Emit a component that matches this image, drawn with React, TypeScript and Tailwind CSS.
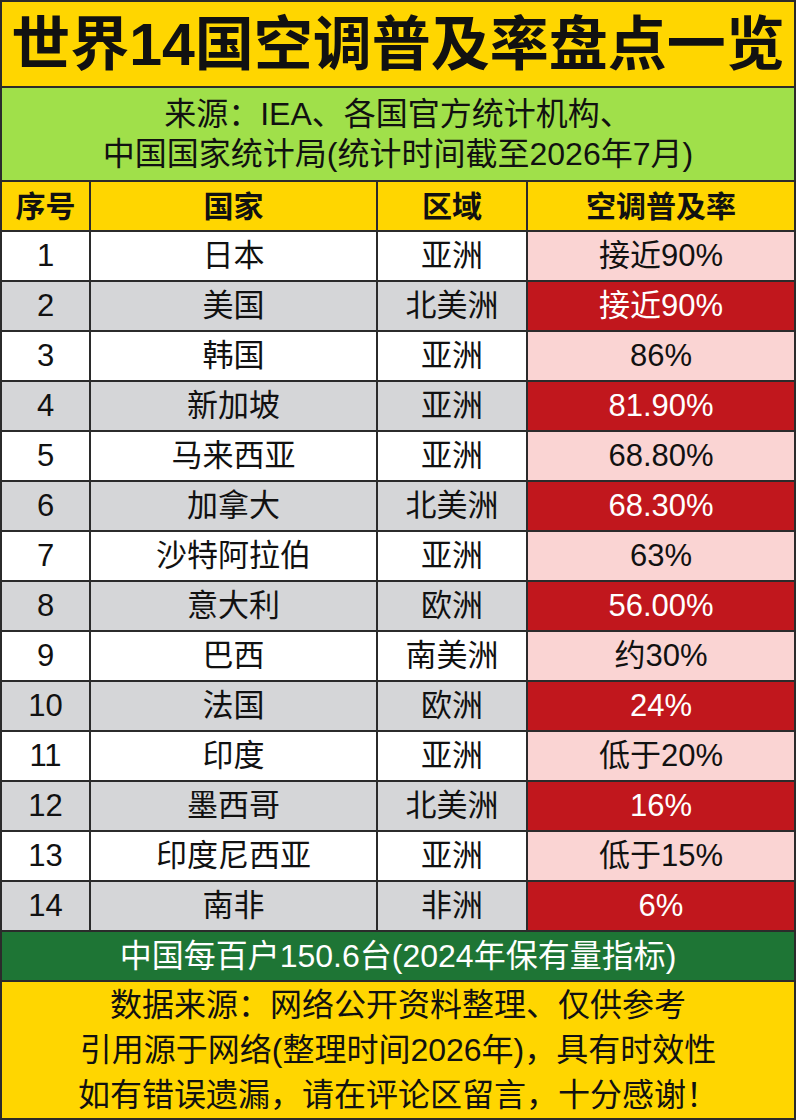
import React from "react";

const rows = [
  { no: 1, country: "日本", region: "亚洲", rate: "接近90%" },
  { no: 2, country: "美国", region: "北美洲", rate: "接近90%" },
  { no: 3, country: "韩国", region: "亚洲", rate: "86%" },
  { no: 4, country: "新加坡", region: "亚洲", rate: "81.90%" },
  { no: 5, country: "马来西亚", region: "亚洲", rate: "68.80%" },
  { no: 6, country: "加拿大", region: "北美洲", rate: "68.30%" },
  { no: 7, country: "沙特阿拉伯", region: "亚洲", rate: "63%" },
  { no: 8, country: "意大利", region: "欧洲", rate: "56.00%" },
  { no: 9, country: "巴西", region: "南美洲", rate: "约30%" },
  { no: 10, country: "法国", region: "欧洲", rate: "24%" },
  { no: 11, country: "印度", region: "亚洲", rate: "低于20%" },
  { no: 12, country: "墨西哥", region: "北美洲", rate: "16%" },
  { no: 13, country: "印度尼西亚", region: "亚洲", rate: "低于15%" },
  { no: 14, country: "南非", region: "非洲", rate: "6%" },
];

const font = {
  fontFamily: '"Liberation Sans", "Noto Sans CJK SC", sans-serif',
};

export default function App() {
  return (
    <div
      style={font}
      className="w-[796px] h-[1120px] flex flex-col border-2 border-[#2b2b2b] text-[#111] overflow-hidden"
    >
      <div className="h-[86px] shrink-0 bg-[#FFD600] border-b-2 border-[#2b2b2b] flex items-center justify-center pt-[2px]">
        <h1 className="text-[59px] font-bold leading-none whitespace-nowrap">
          世界14国空调普及率盘点一览
        </h1>
      </div>

      <div className="h-[94px] shrink-0 bg-[#A0E04A] border-b-2 border-[#2b2b2b] flex flex-col items-center justify-center text-[32px] leading-[40px]">
        <div>来源：IEA、各国官方统计机构、</div>
        <div>中国国家统计局(统计时间截至2026年7月)</div>
      </div>

      <div className="h-[50px] shrink-0 flex bg-[#FFD600] border-b-2 border-[#2b2b2b] text-[30px] font-bold">
        <div className="w-[89px] border-r-2 border-[#2b2b2b] flex items-center justify-center">
          序号
        </div>
        <div className="w-[287px] border-r-2 border-[#2b2b2b] flex items-center justify-center">
          国家
        </div>
        <div className="w-[150px] border-r-2 border-[#2b2b2b] flex items-center justify-center">
          区域
        </div>
        <div className="flex-1 flex items-center justify-center">空调普及率</div>
      </div>

      {rows.map((r) => {
        const even = r.no % 2 === 0;
        const base = even ? "bg-[#D5D6D8]" : "bg-white";
        return (
          <div
            key={r.no}
            className="h-[50px] shrink-0 flex border-b-2 border-[#2b2b2b] text-[31px]"
          >
            <div
              className={`w-[89px] border-r-2 border-[#2b2b2b] flex items-center justify-center ${base}`}
            >
              {r.no}
            </div>
            <div
              className={`w-[287px] border-r-2 border-[#2b2b2b] flex items-center justify-center ${base}`}
            >
              {r.country}
            </div>
            <div
              className={`w-[150px] border-r-2 border-[#2b2b2b] flex items-center justify-center ${base}`}
            >
              {r.region}
            </div>
            <div
              className={`flex-1 flex items-center justify-center ${
                even ? "bg-[#C1171D] text-white" : "bg-[#FAD4D3]"
              }`}
            >
              {r.rate}
            </div>
          </div>
        );
      })}

      <div className="h-[50px] shrink-0 bg-[#1E7535] border-b-2 border-[#2b2b2b] flex items-center justify-center text-white text-[32px]">
        中国每百户150.6台(2024年保有量指标)
      </div>

      <div className="flex-1 bg-[#FFD600] flex flex-col items-center justify-center text-[32px] leading-[45px]">
        <div>数据来源：网络公开资料整理、仅供参考</div>
        <div>引用源于网络(整理时间2026年)，具有时效性</div>
        <div>如有错误遗漏，请在评论区留言，十分感谢！</div>
      </div>
    </div>
  );
}
